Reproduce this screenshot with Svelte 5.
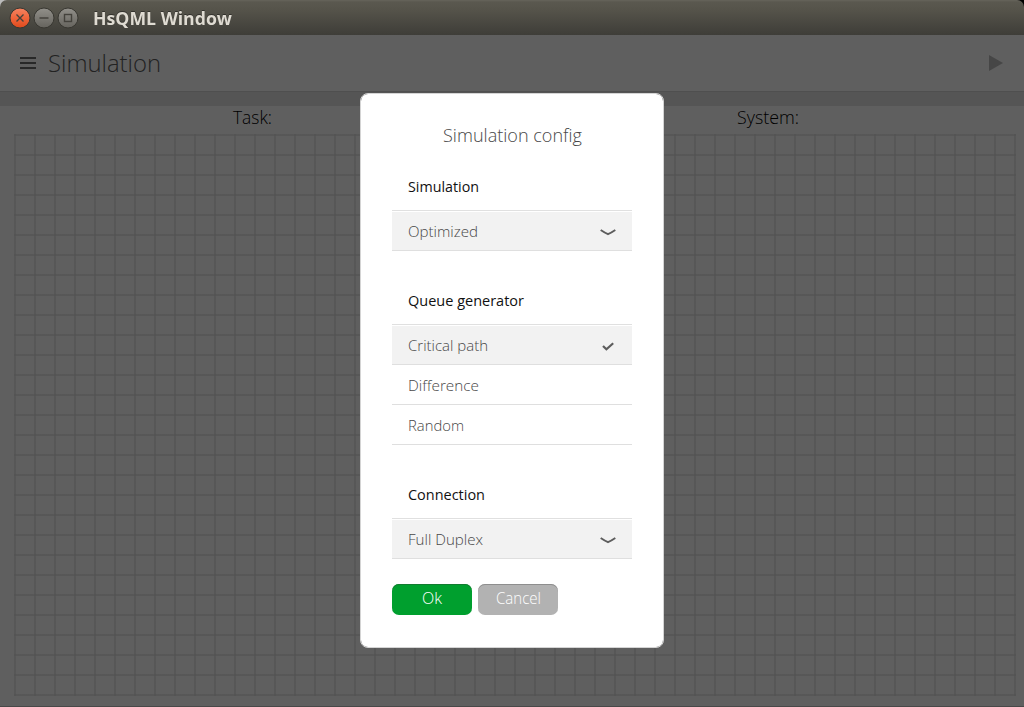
<script>
  const sections = [
    { title: 'Simulation', w: 71, open: false, items: [{ t: 'Optimized', w: 70 }] },
    {
      title: 'Queue generator', w: 116, open: true,
      items: [{ t: 'Critical path', w: 80 }, { t: 'Difference', w: 71 }, { t: 'Random', w: 56 }]
    },
    { title: 'Connection', w: 77, open: false, items: [{ t: 'Full Duplex', w: 75 }] }
  ];
</script>

{#snippet label(text, width, size)}
  <svg class="label" {width} height="30" style:font-size="{size}px" role="img" aria-label={text}>
    <text x="0" y="20" textLength={width} lengthAdjust="spacingAndGlyphs">{text}</text>
  </svg>
{/snippet}

<div class="window">
  <header class="titlebar">
    <svg class="controls" width="72" height="24" viewBox="0 0 72 24">
      <defs>
        <linearGradient id="close" x2="0" y2="1"><stop stop-color="#f58462" /><stop offset=".5" stop-color="#f0653b" /><stop offset="1" stop-color="#df4a1c" /></linearGradient>
        <linearGradient id="grey" x2="0" y2="1"><stop stop-color="#92908a" /><stop offset="1" stop-color="#65635d" /></linearGradient>
      </defs>
      <g stroke="#383731" stroke-width="1">
        <circle cx="12" cy="12" r="10" fill="url(#close)" />
        <circle cx="36" cy="12" r="10" fill="url(#grey)" />
        <circle cx="60" cy="12" r="10" fill="url(#grey)" />
      </g>
      <g fill="none" stroke="#44423c" stroke-width="1.4">
        <path d="M8.5 8.5l7 7M15.5 8.5l-7 7M31.5 12h9" />
        <rect x="56.5" y="8.5" width="7" height="7" />
      </g>
    </svg>
    <div class="caption">{@render label('HsQML Window', 139, 18)}</div>
  </header>

  <div class="toolbar">
    <svg width="16" height="12"><path d="M0 1h16M0 6h16M0 11h16" stroke="#282828" stroke-width="2" /></svg>
    <div class="page-title">{@render label('Simulation', 113, 24)}</div>
    <svg class="play" width="14" height="16"><path d="M0 0l14 8-14 8z" fill="#464646" /></svg>
  </div>
  <div class="band"></div>
  <div class="headings">
    <div>{@render label('Task:', 39, 17.5)}</div>
    <div>{@render label('System:', 62, 17.5)}</div>
  </div>
  <div class="grid"></div>

  <div class="dialog">
    <div class="dialog-title">{@render label('Simulation config', 139, 18)}</div>
    {#each sections as section}
      <section>
        <div class="section-title">{@render label(section.title, section.w, 15)}</div>
        <div class="options">
          {#each section.items as item, i}
            <div class="option" class:selected={i === 0}>
              {@render label(item.t, item.w, 15.3)}
              {#if i === 0 && section.open}
                <svg width="16" height="12"><path d="M3 6l3.4 3.3L13.2 3.3" fill="none" stroke="#5d5d5d" stroke-width="2.2" /></svg>
              {:else if i === 0}
                <svg width="16" height="12"><path d="M.7 4Q4.5 6.6 8 8.2Q11.5 6.6 15.3 4" fill="none" stroke="#5d5d5d" stroke-width="1.9" /></svg>
              {/if}
            </div>
          {/each}
        </div>
      </section>
    {/each}
    <div class="buttons">
      <button class="ok">{@render label('Ok', 20, 15.5)}</button>
      <button>{@render label('Cancel', 45, 15.5)}</button>
    </div>
  </div>
</div>

<style>
  :global(body) { margin: 0; background: #5f5f5f; }
  .window {
    position: relative; box-sizing: border-box; width: 1024px; height: 707px; overflow: hidden;
    display: flex; flex-direction: column; background: #5f5f5f; border-bottom: 1px solid #484848;
    font-family: "Open Sans", "Noto Sans", sans-serif; font-weight: 340;
  }
  .window::before { content: ""; position: absolute; inset: 0 0 auto; height: 10px; background: linear-gradient(90deg, #bbb 50%, #000 50%); }
  .label { display: block; overflow: visible; fill: currentColor; flex: none; }
  .titlebar {
    position: relative; height: 35px; flex: none; box-sizing: border-box; display: flex; align-items: center;
    padding-left: 8px; border-radius: 7px 7px 0 0; color: #dfdbd2; font-weight: 700;
    background: linear-gradient(#66645b 0, #5a584f 2px, #55534a 10px, #3e3d38 100%);
  }
  .controls { display: block; }
  .caption { margin: 4px 0 0 13px; filter: drop-shadow(0 -1px 0 #33322d); }
  .toolbar { height: 56px; flex: none; box-sizing: border-box; display: flex; align-items: center; padding: 0 21px 0 20px; color: #222; }
  .page-title { margin: 8px 0 0 12px; font-weight: 300; }
  .play { margin-left: auto; }
  .band { height: 15px; flex: none; box-sizing: border-box; background: #555; border-top: 1px solid #4f4f4f; }
  .headings { height: 28px; flex: none; display: grid; grid-template-columns: 505px 509px; column-gap: 8px; justify-items: center; color: #000; }
  .headings div { margin-top: -2px; }
  .grid {
    width: 1002px; height: 562px; flex: none; margin-left: 14px;
    background-image: linear-gradient(90deg, #52525299 2px, transparent 2px), linear-gradient(#52525299 2px, transparent 2px);
    background-size: 20px 20px;
  }
  .dialog {
    position: absolute; left: 360px; top: 93px; width: 304px; height: 555px; box-sizing: border-box;
    padding: 0 31px; border: 1px solid #d4d4d4; border-radius: 8px; background: #fff; background-clip: padding-box;
  }
  .dialog-title { height: 69px; display: flex; justify-content: center; padding-top: 28px; box-sizing: border-box; color: #484848; }
  .section-title { height: 47px; box-sizing: border-box; padding: 9px 16px 0; color: #111; font-weight: 400; }
  section { margin-bottom: 26px; }
  .options { border-top: 1px solid #e0e0e0; }
  .option {
    height: 40px; box-sizing: border-box; display: flex; align-items: center; justify-content: space-between;
    padding: 3px 16px 0; border-bottom: 1px solid #dfdfdf; color: #484848;
  }
  .selected { padding-top: 2px; background: #f2f2f2; border-top: 1px solid #fff; }
  .buttons { display: flex; gap: 6px; margin-top: -1px; }
  button {
    width: 80px; height: 31px; padding: 0; border: 0; border-radius: 7px; display: flex; justify-content: center;
    font: inherit; color: #fff; background: #b2b2b2; box-shadow: inset 0 1px 0 #8e8e8e;
  }
  .ok { background: #009f2e; box-shadow: inset 0 1px 0 #127c30; }
</style>
